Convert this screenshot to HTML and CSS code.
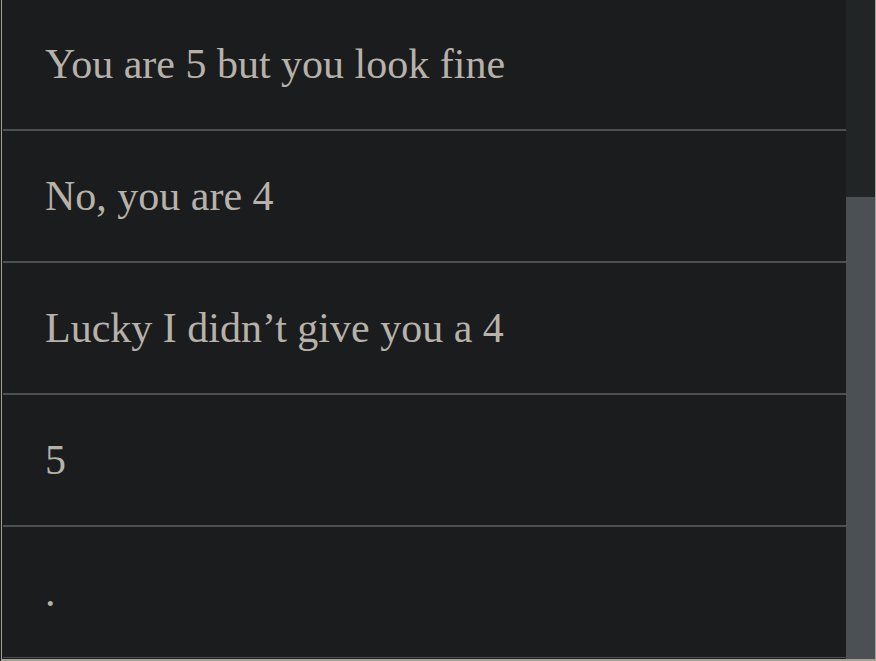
FILE: index.html
```html
<!DOCTYPE html>
<html lang="en">
<head>
<meta charset="utf-8">
<title>Comments</title>
<link rel="stylesheet" href="styles.css">
</head>
<body>
<div class="frame">
  <div class="list">
    <div class="rows">
      <div class="row">You are 5 but you look fine</div>
      <div class="row">No, you are 4</div>
      <div class="row">Lucky I didn’t give you a 4</div>
      <div class="row">5</div>
      <div class="row row-last">.</div>
    </div>
  </div>
  <div class="scrollbar">
    <div class="thumb"></div>
  </div>
</div>
</body>
</html>
```

FILE: styles.css
```css
html, body {
  margin: 0;
  padding: 0;
  height: 661px;
  overflow: hidden;
  background: #1b1c1e;
}

.frame {
  display: flex;
  box-sizing: border-box;
  height: 661px;
  margin-left: 1px;
  border-left: 1px solid #a7a193;
  border-right: 1px solid #a7a193;
  border-bottom: 2px solid #a7a193;
}

.list {
  flex: 1;
  overflow: hidden;
  padding-left: 1px;
}

.rows {
  margin-top: -1px;
}

.row {
  height: 130px;
  border-bottom: 2px solid #4b5053;
  display: flex;
  align-items: center;
  padding-left: 42px;
  font-family: "Liberation Serif", "Times New Roman", serif;
  font-size: 42px;
  color: #b7b2a9;
}

.row-last {
  border-bottom-width: 1px;
}

.scrollbar {
  width: 29px;
  display: flex;
  flex-direction: column;
  background: #222526;
}

.thumb {
  margin-top: 197px;
  flex: 1;
  background: #4a5053;
}
```
